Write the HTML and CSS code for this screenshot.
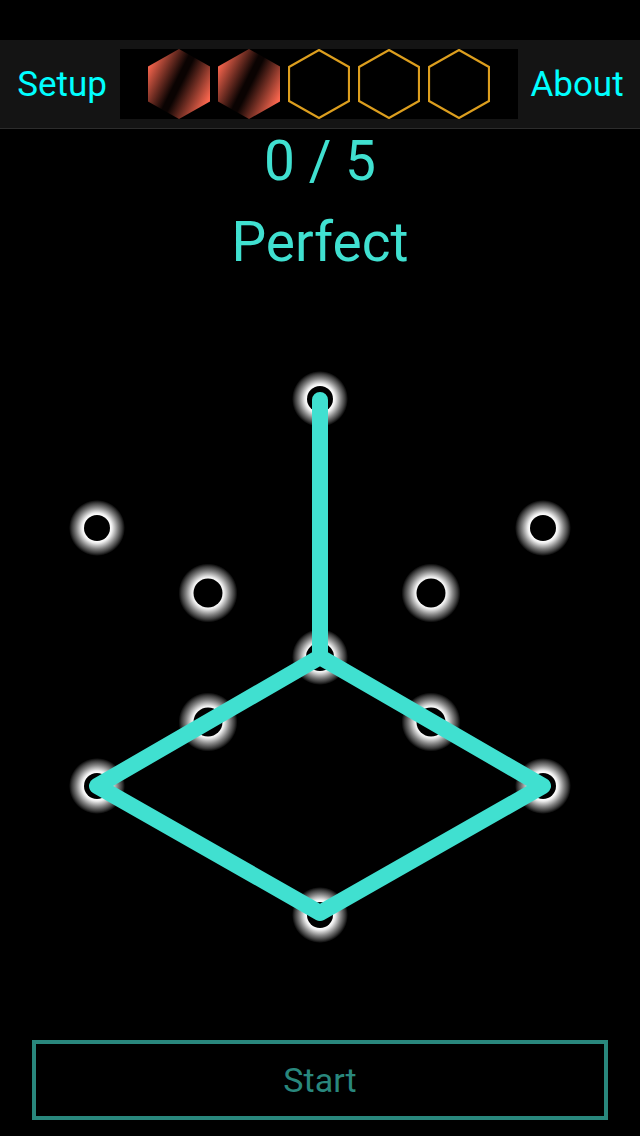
FILE: index.html
```html
<!DOCTYPE html>
<html lang="en">
<head>
  <meta charset="UTF-8">
  <meta name="viewport" content="width=device-width, initial-scale=1.0">
  <title>Perfect</title>
  <link rel="stylesheet" href="styles.css">
</head>
<body>
  <header class="topbar">
    <a class="nav-link nav-setup">Setup</a>
    <div class="lives">
      <svg class="hex" viewBox="0 0 62 70">
        <defs>
          <linearGradient id="hexFill" gradientUnits="userSpaceOnUse" x1="0" y1="17" x2="62" y2="48">
            <stop offset="0" stop-color="#fb674f"/>
            <stop offset="0.46" stop-color="#0a0302"/>
            <stop offset="0.54" stop-color="#0a0302"/>
            <stop offset="1" stop-color="#fb674f"/>
          </linearGradient>
        </defs>
        <polygon class="hex-full" points="31,0 62,17.5 62,52.5 31,70 0,52.5 0,17.5"/>
      </svg>
      <svg class="hex" viewBox="0 0 62 70">
        <polygon class="hex-full" points="31,0 62,17.5 62,52.5 31,70 0,52.5 0,17.5"/>
      </svg>
      <svg class="hex" viewBox="0 0 62 70">
        <polygon class="hex-empty" points="31,1 61,18 61,52 31,69 1,52 1,18"/>
      </svg>
      <svg class="hex" viewBox="0 0 62 70">
        <polygon class="hex-empty" points="31,1 61,18 61,52 31,69 1,52 1,18"/>
      </svg>
      <svg class="hex" viewBox="0 0 62 70">
        <polygon class="hex-empty" points="31,1 61,18 61,52 31,69 1,52 1,18"/>
      </svg>
    </div>
    <a class="nav-link nav-about">About</a>
  </header>

  <div class="score">0 / 5</div>
  <div class="rating">Perfect</div>

  <!-- viewBox uses page coordinates, board starts at y=340 -->
  <svg class="board" viewBox="0 340 640 620">
    <defs>
      <radialGradient id="glowSmall">
        <stop offset="0.47" stop-color="#fff"/>
        <stop offset="0.54" stop-color="#eee"/>
        <stop offset="0.74" stop-color="#858585"/>
        <stop offset="0.9" stop-color="#383838"/>
        <stop offset="1" stop-color="#000"/>
      </radialGradient>
    </defs>
    <g class="dots">
      <circle class="glow" cx="320" cy="399" r="28"/><circle class="hole" cx="320" cy="399" r="13"/>
      <circle class="glow" cx="97" cy="528" r="28"/><circle class="hole" cx="97" cy="528" r="13"/>
      <circle class="glow" cx="543" cy="528" r="28"/><circle class="hole" cx="543" cy="528" r="13"/>
      <circle class="glow" cx="208" cy="593" r="29.5"/><circle class="hole" cx="208" cy="593" r="14.5"/>
      <circle class="glow" cx="431" cy="593" r="29.5"/><circle class="hole" cx="431" cy="593" r="14.5"/>
      <circle class="glow" cx="320" cy="657" r="28"/><circle class="hole" cx="320" cy="657" r="14"/>
      <circle class="glow" cx="208" cy="722" r="29.5"/><circle class="hole" cx="208" cy="722" r="14.5"/>
      <circle class="glow" cx="431" cy="722" r="29.5"/><circle class="hole" cx="431" cy="722" r="14.5"/>
      <circle class="glow" cx="97" cy="786" r="28"/><circle class="hole" cx="97" cy="786" r="13"/>
      <circle class="glow" cx="543" cy="786" r="28"/><circle class="hole" cx="543" cy="786" r="13"/>
      <circle class="glow" cx="320" cy="915" r="28"/><circle class="hole" cx="320" cy="915" r="13"/>
    </g>
    <path class="trace" d="M320 400 V657 L97 786 L320 913 L543 786 L320 657"/>
  </svg>

  <button class="start-btn">Start</button>
</body>
</html>
```

FILE: styles.css
```css
html, body {
  margin: 0;
  padding: 0;
}
body {
  background-color: #000;
  font-family: 'Roboto', 'Liberation Sans', Arial, sans-serif;
  font-weight: 400;
  width: 640px;
  height: 1136px;
  padding-top: 40px;
  box-sizing: border-box;
  overflow: hidden;
  display: flex;
  flex-direction: column;
}
.topbar {
  display: flex;
  align-items: center;
  height: 89px;
  box-sizing: border-box;
  padding-bottom: 1px;
  background-color: #141414;
  border-bottom: 1px solid #2c2c2c;
}
.nav-link {
  color: #00ffff;
  font-size: 35px;
  text-align: center;
  box-sizing: border-box;
  padding-top: 2px;
}
.nav-setup {
  width: 120px;
  padding-left: 4px;
}
.nav-about {
  width: 122px;
  padding-right: 4px;
}
.lives {
  width: 398px;
  height: 70px;
  background-color: #000;
  box-sizing: border-box;
  padding-left: 28px;
  display: flex;
  gap: 8px;
  align-items: center;
}
.hex {
  width: 62px;
  height: 70px;
  display: block;
}
.hex-full {
  fill: url(#hexFill);
}
.hex-empty {
  fill: none;
  stroke: #dc9e1e;
  stroke-width: 2.2;
}
.score, .rating {
  color: #40e0d0;
  font-size: 55px;
  text-align: center;
  line-height: 64px;
}
.rating {
  margin-top: 17px;
}
.board {
  display: block;
  width: 640px;
  height: 620px;
  margin-top: 66px;
}
.glow {
  fill: url(#glowSmall);
}
.hole {
  fill: #000;
}
.trace {
  fill: none;
  stroke: #40e0d0;
  stroke-width: 16;
  stroke-linecap: round;
  stroke-linejoin: round;
}
.start-btn {
  display: block;
  width: 576px;
  height: 80px;
  margin: 80px 32px 0;
  box-sizing: border-box;
  background: transparent;
  border: 4px solid #29877d;
  color: #29877d;
  font-family: inherit;
  font-size: 34px;
}
```
